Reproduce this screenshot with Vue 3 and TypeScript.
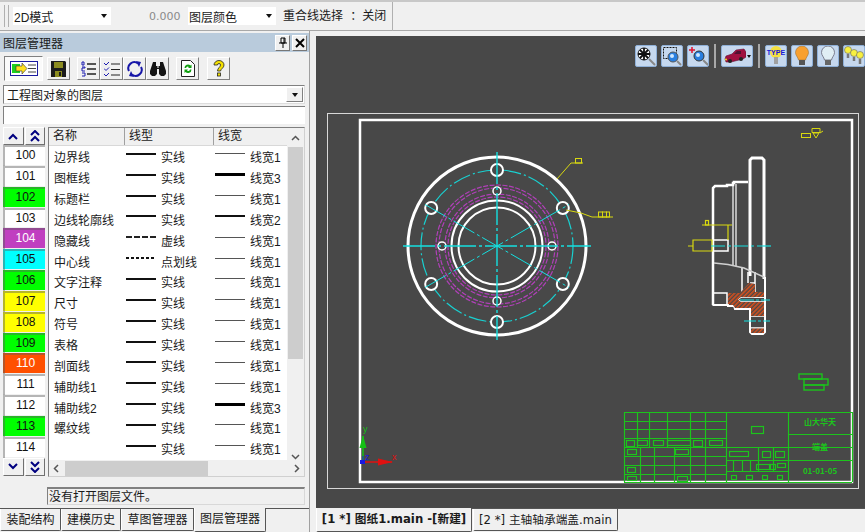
<script setup lang="ts">
interface Layer {
  no: number
  name: string
  type: 'solid' | 'dash' | 'center'
  width: 1 | 2 | 3
  color?: string
  light?: boolean
}

const layers: Layer[] = [
  { no: 100, name: '边界线', type: 'solid', width: 1 },
  { no: 101, name: '图框线', type: 'solid', width: 3 },
  { no: 102, name: '标题栏', type: 'solid', width: 1, color: '#00ff00' },
  { no: 103, name: '边线轮廓线', type: 'solid', width: 2 },
  { no: 104, name: '隐藏线', type: 'dash', width: 1, color: '#c03fc0', light: true },
  { no: 105, name: '中心线', type: 'center', width: 1, color: '#00ffff' },
  { no: 106, name: '文字注释', type: 'solid', width: 1, color: '#00ff00' },
  { no: 107, name: '尺寸', type: 'solid', width: 1, color: '#ffff00' },
  { no: 108, name: '符号', type: 'solid', width: 1, color: '#ffff00' },
  { no: 109, name: '表格', type: 'solid', width: 1, color: '#00ff00' },
  { no: 110, name: '剖面线', type: 'solid', width: 1, color: '#ff5000', light: true },
  { no: 111, name: '辅助线1', type: 'solid', width: 1 },
  { no: 112, name: '辅助线2', type: 'solid', width: 3 },
  { no: 113, name: '螺纹线', type: 'solid', width: 1, color: '#00ff00' },
  { no: 114, name: '', type: 'solid', width: 1 },
]

const typeNames = { solid: '实线', dash: '虚线', center: '点划线' }

const cx = 181
const cy = 210
const rad = Math.PI / 180
const boltHoles = [90, 30, -30, -90, -150, 150].map((a) => ({
  x: cx + 76 * Math.cos(a * rad),
  y: cy - 76 * Math.sin(a * rad),
}))
const pinHoles = [
  { x: cx, y: cy - 55 },
  { x: cx, y: cy + 55 },
  { x: cx - 55, y: cy },
  { x: cx + 55, y: cy },
]

// title block cells, coords are in the canvas svg (viewport origin 316,36)
const tbH = [
  [308, 410, 385], [308, 410, 393], [308, 410, 402], [308, 410, 411], [308, 410, 420],
  [308, 410, 429], [308, 410, 438], [410, 536, 411], [410, 472, 424], [410, 472, 435],
  [472, 536, 398], [472, 536, 424], [308, 536, 376], [308, 536, 446],
]
const tbV = [
  [308, 376, 446], [321, 376, 411], [333, 376, 411], [351, 376, 411], [374, 376, 446],
  [389, 376, 446], [324, 411, 446], [338, 411, 446], [358, 411, 446], [410, 376, 446],
  [472, 376, 446], [536, 376, 446], [442, 411, 435], [457, 411, 435], [417, 424, 435],
  [426, 424, 435], [434, 424, 435],
]
const tbBoxes = [
  [310, 404, 8, 6], [321, 404, 10, 5], [337, 404, 10, 5], [351, 404, 23, 5], [377, 404, 9, 6],
  [393, 404, 13, 5], [311, 413, 9, 5], [359, 413, 13, 5], [311, 431, 8, 5], [311, 440, 9, 4],
  [361, 440, 10, 5], [435, 390, 12, 7], [413, 415, 19, 5], [446, 415, 8, 6], [459, 415, 9, 6],
  [440, 428, 19, 5], [453, 428, 1, 5], [461, 427, 8, 4], [415, 439, 5, 4], [430, 439, 6, 4],
  [446, 439, 5, 4], [461, 439, 5, 4],
]
</script>

<template>
  <div class="app">
    <div class="topbar">
      <span class="grip"></span>
      <div class="combo mode"><span>2D模式</span><i class="arrow"></i></div>
      <span class="zero">0.000</span>
      <div class="combo color"><span>图层颜色</span><i class="arrow"></i></div>
      <span class="overlap">重合线选择 ：关闭</span>
    </div>

    <div class="main">
      <aside class="side">
        <div class="title">
          <span>图层管理器</span>
          <div class="title-btns">
            <button class="mini">
              <svg width="10" height="11" viewBox="0 0 10 11"><path d="M3 1h4v5H3zM1 6h8M5 6v5M6 1v5" fill="none" stroke="#000" /></svg>
            </button>
            <button class="mini">
              <svg width="10" height="10" viewBox="0 0 10 10"><path d="M1 1l8 8M9 1l-8 8" stroke="#000" stroke-width="2" /></svg>
            </button>
          </div>
        </div>

        <div class="tools">
          <button class="tool wide">
            <svg width="28" height="15" viewBox="0 0 28 15">
              <rect x="0.5" y="0.5" width="27" height="14" fill="#fff" stroke="#1a1aa0" />
              <rect x="2" y="3" width="8" height="9" fill="#20d020" />
              <path d="M6 5h6V2l5 5.500-5 5.500v-3H6z" fill="#ffe020" stroke="#333" stroke-width=".6" />
              <path d="M18 4h8M18 7.500h8M18 11h8" stroke="#444" />
            </svg>
          </button>
          <button class="tool">
            <svg width="15" height="16" viewBox="0 0 15 16">
              <path d="M0 0h14l1 1v15H0z" fill="#1c1c1c" />
              <rect x="3" y="1" width="9" height="6" fill="#8c8c20" />
              <rect x="4" y="10" width="7" height="6" fill="#8c8c20" />
              <rect x="8" y="11" width="2" height="4" fill="#1c1c1c" />
            </svg>
          </button>
          <i class="gap"></i>
          <button class="tool">
            <svg width="16" height="16" viewBox="0 0 16 16">
              <path d="M1 1h2v3H1zM1 6h3v1H1v3h3M1 12h3v3H1" fill="none" stroke="#1a1ab0" />
              <path d="M6 3h9M6 8h9M6 13h9" stroke="#222" stroke-width="1.600" />
            </svg>
          </button>
          <button class="tool">
            <svg width="16" height="16" viewBox="0 0 16 16">
              <path d="M0 2l2 2 3-3M0 7.500l2 2 3-3M0 13l2 2 3-3" fill="none" stroke="#1a1ab0" />
              <path d="M7 3h9M7 8.500h9M7 14h9" stroke="#222" />
            </svg>
          </button>
          <button class="tool">
            <svg width="16" height="16" viewBox="0 0 16 16">
              <path d="M2 10A6 6 0 0 1 11 2.500M14 6a6 6 0 0 1-9 7.500" fill="none" stroke="#1616a8" stroke-width="2" />
              <path d="M9 0l5 1-2 5zM7 16l-5-1 2-5z" fill="#1616a8" />
            </svg>
          </button>
          <button class="tool">
            <svg width="16" height="15" viewBox="0 0 16 15">
              <path d="M3 1h3v4h4V1h3l3 9v3l-2 2h-3l-2-2V8H7v5l-2 2H2l-2-2v-3z" fill="#151515" />
              <rect x="7" y="5" width="2" height="2" fill="#888" />
            </svg>
          </button>
          <i class="gap"></i>
          <button class="tool">
            <svg width="14" height="17" viewBox="0 0 14 17">
              <path d="M.5.500h9l4 4v12H.500z" fill="#fff" stroke="#222" />
              <path d="M3.500 8a3.500 3.500 0 0 1 6-2.500l1-1v3.500H7l1-1A2 2 0 0 0 5 8z" fill="#12a012" />
              <path d="M10.500 9.500a3.500 3.500 0 0 1-6 2.500l-1 1V9.500H7l-1 1a2 2 0 0 0 3-1z" fill="#12a012" />
            </svg>
          </button>
          <i class="gap wider"></i>
          <button class="tool">
            <svg width="12" height="18" viewBox="0 0 12 18">
              <path d="M1 5a5 4.500 0 0 1 10 0c0 3-3 3.500-3.500 6h-3c0-3 3-4 3-6a1.500 1.500 0 0 0-3 0z" fill="#f4e000" stroke="#222" stroke-width=".8" />
              <rect x="4.500" y="13" width="3" height="3" fill="#f4e000" stroke="#222" stroke-width=".8" />
            </svg>
          </button>
        </div>

        <div class="select-line"><span>工程图对象的图层</span><button class="drop"><i class="arrow"></i></button></div>
        <div class="input-line"></div>

        <div class="layers">
          <div class="numbers">
            <div class="steppers">
              <button class="step">
                <svg width="10" height="7" viewBox="0 0 10 7"><path d="M1 6l4-4 4 4" fill="none" stroke="#000080" stroke-width="2" /></svg>
              </button>
              <button class="step">
                <svg width="10" height="12" viewBox="0 0 10 12"><path d="M1 5l4-4 4 4M1 11l4-4 4 4" fill="none" stroke="#000080" stroke-width="2" /></svg>
              </button>
            </div>
            <div
              v-for="l in layers"
              :key="l.no"
              class="num"
              :class="{ light: l.light }"
              :style="{ background: l.color || '#fff' }"
            >{{ l.no }}</div>
            <div class="steppers">
              <button class="step">
                <svg width="10" height="7" viewBox="0 0 10 7"><path d="M1 1l4 4 4-4" fill="none" stroke="#000080" stroke-width="2" /></svg>
              </button>
              <button class="step">
                <svg width="10" height="12" viewBox="0 0 10 12"><path d="M1 1l4 4 4-4M1 7l4 4 4-4" fill="none" stroke="#000080" stroke-width="2" /></svg>
              </button>
            </div>
          </div>

          <div class="grid-box">
            <div class="grid-top">
              <div class="grid-main">
                <div class="head">
                  <span class="c1">名称</span>
                  <span class="c2">线型</span>
                  <span class="c3">线宽</span>
                </div>
                <div v-for="l in layers" :key="l.no" class="row">
                  <span class="c1 name">{{ l.name }}</span>
                  <span class="c2 cell">
                    <i class="line" :class="l.type"></i>{{ typeNames[l.type] }}
                  </span>
                  <span class="c3 cell">
                    <i class="wline" :class="'w' + l.width"></i>线宽{{ l.width }}
                  </span>
                </div>
              </div>
              <div class="vscroll">
                <svg width="9" height="6" viewBox="0 0 9 6"><path d="M1 5l3.500-3.500L8 5" fill="none" stroke="#555" stroke-width="1.500" /></svg>
                <div class="vtrack"><div class="vthumb"></div></div>
                <svg width="9" height="6" viewBox="0 0 9 6"><path d="M1 1l3.500 3.500L8 1" fill="none" stroke="#555" stroke-width="1.500" /></svg>
              </div>
            </div>
            <div class="hscroll">
              <svg width="6" height="9" viewBox="0 0 6 9"><path d="M5 1L1.500 4.500 5 8" fill="none" stroke="#555" stroke-width="1.500" /></svg>
              <div class="htrack"><div class="hthumb"></div></div>
              <svg width="6" height="9" viewBox="0 0 6 9"><path d="M1 1l3.500 3.500L1 8" fill="none" stroke="#555" stroke-width="1.500" /></svg>
            </div>
          </div>
        </div>

        <div class="status">没有打开图层文件。</div>

        <div class="tabs left-tabs">
          <span class="tab t1">装配结构</span>
          <span class="tab t2">建模历史</span>
          <span class="tab t3">草图管理器</span>
          <span class="tab t4 active">图层管理器</span>
        </div>
      </aside>

      <section class="work">
        <div class="viewport">
          <svg class="canvas" width="549" height="472" viewBox="0 0 549 472">
            <defs>
              <pattern id="hatch" width="3" height="3" patternUnits="userSpaceOnUse" patternTransform="rotate(-45)">
                <rect width="3" height="3" fill="#484848" />
                <rect width="3" height="1.600" fill="#d8501c" />
              </pattern>
            </defs>

            <rect x="11.500" y="77.500" width="531" height="375" fill="none" stroke="#d8d8d8" />
            <rect x="44" y="84" width="492" height="362" fill="none" stroke="#fff" stroke-width="2.500" />

            <!-- front view -->
            <g fill="none">
              <circle :cx="cx" :cy="cy" r="89" stroke="#fff" stroke-width="3" />
              <circle :cx="cx" :cy="cy" r="76" stroke="#19d0d0" stroke-width="1.200" stroke-dasharray="18 3 2 3" />
              <circle :cx="cx" :cy="cy" r="61" stroke="#b040b8" stroke-width="1.200" stroke-dasharray="5 1.500" />
              <circle :cx="cx" :cy="cy" r="58" stroke="#b040b8" stroke-width="1.200" stroke-dasharray="5 1.500" />
              <circle :cx="cx" :cy="cy" r="52" stroke="#b040b8" stroke-width="1.200" stroke-dasharray="5 1.500" />
              <circle :cx="cx" :cy="cy" r="49" stroke="#b040b8" stroke-width="1.200" stroke-dasharray="5 1.500" />
              <circle :cx="cx" :cy="cy" r="45.500" stroke="#fff" stroke-width="2" />
              <circle :cx="cx" :cy="cy" r="38.500" stroke="#fff" stroke-width="2" />
              <circle v-for="(h, i) in boltHoles" :key="i" :cx="h.x" :cy="h.y" r="6" stroke="#fff" stroke-width="2" fill="#484848" />
              <circle v-for="(h, i) in pinHoles" :key="i" :cx="h.x" :cy="h.y" r="4" stroke="#fff" stroke-width="1.500" fill="#484848" />
              <g stroke="#14e0e0">
                <path d="M87 210h188" stroke-width="1.400" stroke-dasharray="32 3 3 3" />
                <path d="M181 116v188" stroke-width="1.400" stroke-dasharray="32 3 3 3" />
                <path :d="`M${cx - 72} ${cy - 41.500}L${cx + 72} ${cy + 41.500}M${cx - 72} ${cy + 41.500}L${cx + 72} ${cy - 41.500}`" stroke-width="1" stroke-dasharray="24 3 3 3" />
              </g>
              <g stroke="#d8d810" stroke-width="1">
                <path d="M241 143l14-16h12" />
                <path d="M250 174l15 3 11 4h21" />
                <rect x="259.500" y="122.500" width="6" height="4.500" />
                <rect x="282.500" y="176" width="4" height="5" />
                <rect x="286.500" y="176" width="4" height="5" />
                <rect x="290.500" y="176" width="3" height="5" />
              </g>
            </g>

            <!-- side view -->
            <g fill="none" stroke="#fff" stroke-width="2">
              <path d="M397 269V152l2-2h12v-1h6v-2h1v-1h14" stroke-width="2.500" />
              <path d="M417 149v80M420 148v82" stroke-width="1.200" />
              <path d="M434 240V124l2-2h10l2 2v119" stroke-width="3" />
              <path d="M397 257h14v12H397zM397 204h15v11H397z" stroke-width="1.500" />
              <path d="M397 269h15v1h6l1 3h15V296l2 2h11l2-2V241" stroke-width="2" />
              <path d="M426 232v24M432 236v11M434 247h5v-11M439 247v14h10" stroke-width="1.500" />
              <path d="M425 261h23M425 266h23M425 261l-3 2.500 3 2.500" stroke-width="1.500" />
              <path d="M435 280h14M435 292h14" stroke-width="1.500" />
              <path d="M398 227l14 1.500 16 3.500 20 9" stroke-width="1.500" stroke="#d0d0d0" />
            </g>
            <path d="M412 257h12l9-10 6 1v8h9v5h-23l-3 2.500 3 2.500h23v14h-13v-8h-16l-2-3-5-1z" fill="url(#hatch)" />
            <rect x="435" y="292.500" width="13" height="4.500" fill="url(#hatch)" />
            <g fill="none" stroke="#d8d810" stroke-width="1.200">
              <path d="M386 189h30M412 189v15M377 204h19v11h-19zM372 210h5" />
              <rect x="389.500" y="184.500" width="3" height="4.500" />
            </g>
            <g stroke="#14e0e0" stroke-width="1.200" fill="none">
              <path d="M395 210h61" stroke-dasharray="14 3 3 3" />
              <path d="M424 264h30" stroke-dasharray="14 2 3 2" />
              <path d="M428 285h26" stroke-dasharray="12 2 3 2" />
            </g>

            <!-- yellow mark top right -->
            <g fill="none" stroke="#d8d810">
              <rect x="485.500" y="97.500" width="9" height="4" />
              <path d="M496 92.500h8v4h-8zM497 97h6l-3 5zM504 97l3-2" />
            </g>

            <!-- green notes -->
            <g fill="none" stroke="#1cc41c" stroke-width="1.400">
              <rect x="483" y="338" width="23" height="5" />
              <rect x="488" y="343" width="24" height="6" />
              <rect x="488" y="349" width="20" height="5" />
            </g>

            <!-- title block -->
            <g stroke="#1cc41c" stroke-width="1.200">
              <path v-for="(h, i) in tbH" :key="'h' + i" :d="`M${h[0]} ${h[2] + 0.5}H${h[1]}`" />
              <path v-for="(v, i) in tbV" :key="'v' + i" :d="`M${v[0] + 0.5} ${v[1]}V${v[2]}`" />
              <rect v-for="(b, i) in tbBoxes" :key="'b' + i" :x="b[0] + 0.5" :y="b[1] + 0.5" :width="b[2]" :height="b[3]" fill="none" />
            </g>
            <g class="tb-text" fill="#1cc41c" text-anchor="middle">
              <text x="504" y="389">山大华天</text>
              <text x="504" y="414">端盖</text>
              <text x="504" y="438">01-01-05</text>
            </g>

            <!-- axis triad -->
            <g>
              <path d="M47 426V400" stroke="#14c014" stroke-width="1.500" />
              <path d="M47 399l3.500 13h-7z" fill="#14c014" />
              <path d="M47 426H76" stroke="#e01010" stroke-width="1.500" />
              <path d="M77 426l-15-3.500v7z" fill="#e01010" />
              <rect x="44" y="424" width="5" height="4" fill="#1818e0" />
              <path d="M47 426v-6" stroke="#1818e0" />
              <text x="47" y="396" class="axis" fill="#14c014">y</text>
              <text x="49" y="424" class="axis" fill="#1818e0">z</text>
              <text x="76" y="424" class="axis" fill="#e01010">x</text>
            </g>
          </svg>

          <div class="view-tools">
            <button class="vbtn">
              <svg width="20" height="20" viewBox="0 0 20 20">
                <circle cx="8" cy="8" r="6" fill="#fff" stroke="#111" />
                <path d="M8 2v12M2 8h12M4 4l8 8M12 4l-8 8" stroke="#111" stroke-width="1.800" />
                <path d="M13 13l6 6" stroke="#888" stroke-width="2" />
              </svg>
            </button>
            <button class="vbtn">
              <svg width="20" height="20" viewBox="0 0 20 20">
                <rect x="1.500" y="1.500" width="13" height="11" fill="none" stroke="#111" stroke-dasharray="2 1" />
                <circle cx="11" cy="11" r="5" fill="#2a7fe0" stroke="#555" />
                <circle cx="10" cy="10" r="2" fill="#cfe8ff" />
                <path d="M15 15l4 4" stroke="#888" stroke-width="2" />
              </svg>
            </button>
            <button class="vbtn">
              <svg width="20" height="20" viewBox="0 0 20 20">
                <path d="M4 1v6M1 4h6" stroke="#e01030" stroke-width="1.500" />
                <circle cx="11" cy="10" r="5" fill="#2a7fe0" stroke="#333" />
                <circle cx="10" cy="9" r="2" fill="#cfe8ff" />
                <path d="M15 14l5 5" stroke="#888" stroke-width="2" />
              </svg>
            </button>
            <i class="vsep"></i>
            <button class="vbtn car">
              <svg width="22" height="16" viewBox="0 0 22 16">
                <path d="M1 11l1-3 6-2 4-4 8-1 2 3v5l-3 2-12 3-5 0z" fill="#a01040" stroke="#601030" stroke-width=".6" />
                <path d="M10 6l3-3 4 0 0 3z" fill="#501030" />
                <circle cx="6" cy="13" r="2" fill="#222" />
                <circle cx="17" cy="11" r="2" fill="#222" />
                <circle cx="2" cy="11.500" r="1" fill="#f0e020" />
              </svg>
              <i class="arrow dark"></i>
            </button>
            <i class="vsep"></i>
            <button class="vbtn">
              <svg width="20" height="20" viewBox="0 0 20 20">
                <circle cx="10" cy="6" r="6" fill="#f4e040" />
                <rect x="8" y="11" width="4" height="7" fill="#a0a0a0" />
                <text x="10" y="9" text-anchor="middle" class="type-txt">TYPE</text>
              </svg>
            </button>
            <button class="vbtn">
              <svg width="16" height="20" viewBox="0 0 16 20">
                <path d="M8 0a6.500 6.500 0 0 1 6.500 6.500c0 3-2.500 4.500-3 7.500h-7c-.5-3-3-4.500-3-7.500A6.500 6.500 0 0 1 8 0z" fill="#f8a030" stroke="#a07030" stroke-width=".6" />
                <rect x="5" y="14" width="6" height="5" fill="#555" />
              </svg>
            </button>
            <button class="vbtn">
              <svg width="16" height="20" viewBox="0 0 16 20">
                <path d="M8 0a6.500 6.500 0 0 1 6.500 6.500c0 3-2.500 4.500-3 7.500h-7c-.5-3-3-4.500-3-7.500A6.500 6.500 0 0 1 8 0z" fill="#e0eef4" stroke="#667" stroke-width=".8" />
                <rect x="5" y="14" width="6" height="5" fill="#666" />
              </svg>
            </button>
            <button class="vbtn">
              <svg width="20" height="20" viewBox="0 0 20 20">
                <circle cx="4" cy="4" r="3.500" fill="#f8f040" stroke="#666" stroke-width=".6" />
                <circle cx="10" cy="7" r="3.500" fill="#f8f040" stroke="#666" stroke-width=".6" />
                <circle cx="16" cy="9" r="3.500" fill="#f8f040" stroke="#666" stroke-width=".6" />
                <path d="M4 8v4M10 11v4M16 13v5" stroke="#777" stroke-width="2.500" />
              </svg>
            </button>
          </div>
        </div>

        <div class="tabs doc-tabs">
          <span class="tab doc active-doc">[1 *] 图纸1.main -[新建]</span>
          <span class="tab doc second">[2 *] 主轴轴承端盖.main</span>
        </div>
      </section>
    </div>
  </div>
</template>

<style>
html,
body {
  margin: 0;
  background: #f0f0f0;
}
</style>

<style scoped>
.app {
  width: 865px;
  height: 532px;
  overflow: hidden;
  display: flex;
  flex-direction: column;
  background: #f0f0f0;
  font-family: "Liberation Sans", "Noto Sans CJK SC", sans-serif;
  font-size: 12px;
  color: #1a1a1a;
}
button {
  padding: 0;
  font: inherit;
  display: flex;
  align-items: center;
  justify-content: center;
  background: #f0f0f0;
}
i {
  font-style: normal;
}
.arrow {
  width: 0;
  height: 0;
  border-left: 3.5px solid transparent;
  border-right: 3.5px solid transparent;
  border-top: 4px solid #111;
}

/* top toolbar */
.topbar {
  height: 31px;
  flex: none;
  box-sizing: border-box;
  display: flex;
  align-items: center;
  border-top: 2px solid #c8c8c8;
  border-bottom: 1px solid #a8a8a8;
  padding-left: 4px;
}
.grip {
  width: 3px;
  height: 22px;
  margin-right: 4px;
  border-left: 1px solid #b0b0b0;
  border-right: 1px solid #b0b0b0;
}
.combo {
  height: 18px;
  background: #fff;
  display: flex;
  align-items: center;
  justify-content: space-between;
  font-size: 12px;
  padding: 0 4px 0 1px;
  box-sizing: border-box;
}
.mode {
  width: 98px;
}
.color {
  width: 88px;
}
.zero {
  margin-left: 38px;
  width: 39px;
  color: #8a8a8a;
  font-family: "DejaVu Sans", sans-serif;
  font-size: 11px;
}
.overlap {
  margin-left: 7px;
  width: 109px;
  height: 29px;
  line-height: 28px;
  font-size: 12px;
  word-spacing: 4px;
  white-space: nowrap;
  border-right: 1px solid #b0b0b0;
}

.main {
  flex: 1;
  display: flex;
  min-height: 0;
}

/* left panel */
.side {
  width: 310px;
  flex: none;
  display: flex;
  flex-direction: column;
  box-sizing: border-box;
  padding-top: 2px;
  border-right: 1px solid #a0a0a0;
}
.title {
  height: 19px;
  flex: none;
  background: #b9cbdc;
  display: flex;
  align-items: center;
  justify-content: space-between;
  padding: 0 2px 0 3px;
  font-size: 12px;
}
.title-btns {
  display: flex;
  gap: 2px;
}
.mini {
  width: 15px;
  height: 16px;
  border: 1px solid;
  border-color: #fff #777 #777 #fff;
}
.tools {
  height: 31px;
  flex: none;
  display: flex;
  align-items: center;
  padding: 2px 0 0 4px;
  box-sizing: border-box;
}
.tool {
  width: 23px;
  height: 23px;
  border: 1px solid;
  border-color: #fff #808080 #808080 #fff;
}
.tool.wide {
  width: 39px;
  height: 25px;
  margin-right: 4px;
  background: #fafafa;
  border-color: #808080 #fff #fff #808080;
}
.gap {
  width: 7px;
}
.gap.wider {
  width: 8px;
}
.select-line {
  margin: 2px 4px 0 3px;
  height: 19px;
  flex: none;
  background: #fff;
  border: 1px solid #808080;
  border-right-color: #ddd;
  border-bottom-color: #ddd;
  box-sizing: border-box;
  display: flex;
  align-items: center;
  justify-content: space-between;
  padding-left: 3px;
  font-size: 12px;
}
.drop {
  width: 17px;
  height: 15px;
  margin-right: 1px;
  border: 1px solid;
  border-color: #fff #808080 #808080 #fff;
}
.input-line {
  margin: 2px 4px 0 3px;
  height: 18px;
  flex: none;
  background: #fff;
  border-top: 1px solid #808080;
  border-left: 1px solid #808080;
  box-sizing: border-box;
}
.layers {
  display: flex;
  margin: 3px 4px 0 3px;
  gap: 3px;
}
.numbers {
  width: 42px;
  flex: none;
}
.steppers {
  display: flex;
  gap: 1px;
  height: 18px;
}
.step {
  width: 21px;
  height: 18px;
  border: 1px solid;
  border-color: #fff #707070 #707070 #fff;
}
.num {
  height: 20.85px;
  box-sizing: border-box;
  line-height: 21px;
  text-align: center;
  padding-left: 3px;
  font-size: 12px;
  color: #111;
  box-shadow: inset 2px 2px 0 rgba(90, 90, 90, 0.45), inset 0 -1px 0 #f0f0f0;
}
.num.light {
  color: #fff;
}
.grid-box {
  flex: 1;
  min-width: 0;
  box-sizing: border-box;
  height: 350px;
  border: 1px solid;
  border-color: #808080 #d0d0d0 #d0d0d0 #808080;
  overflow: hidden;
}
.grid-top {
  display: flex;
  height: 332px;
}
.grid-main {
  flex: 1;
  min-width: 0;
  background: #fff;
}
.head {
  height: 17px;
  display: flex;
  background: #f0f0f0;
  align-items: center;
  box-shadow: 0 1px 0 #d8d8d8;
  font-size: 12px;
}
.head .c1,
.head .c2 {
  border-right: 1px solid #a0a0a0;
}
.head span {
  padding-left: 4px;
  box-sizing: border-box;
  height: 17px;
  line-height: 17px;
}
.row {
  height: 20.85px;
  display: flex;
  align-items: center;
  font-size: 12px;
  box-sizing: border-box;
  padding-top: 3px;
}
.c1 {
  width: 76px;
  flex: none;
}
.c2 {
  width: 89px;
  flex: none;
}
.c3 {
  width: 72px;
  flex: none;
}
.name {
  padding-left: 5px;
  box-sizing: border-box;
  white-space: nowrap;
}
.cell {
  display: flex;
  align-items: center;
  white-space: nowrap;
  overflow: hidden;
}
.line,
.wline {
  display: block;
  width: 30px;
  flex: none;
  margin: -6px 5px 0 1px;
  height: 0;
  border-top: 2px solid #111;
}
.line.dash {
  border-top: 2px dashed #222;
}
.line.center {
  border-top: 0;
  height: 2px;
  background: repeating-linear-gradient(90deg, #111 0 3px, transparent 3px 5px);
}
.wline {
  margin-right: 5px;
}
.wline.w1 {
  border-top: 1px solid #555;
}
.wline.w2 {
  border-top: 2px solid #111;
}
.wline.w3 {
  border-top: 3px solid #000;
}
.vscroll {
  width: 17px;
  flex: none;
  background: #f0f0f0;
  display: flex;
  flex-direction: column;
  align-items: center;
  padding-top: 7px;
  box-sizing: border-box;
}
.vtrack {
  flex: 1;
  width: 15px;
  padding-top: 6px;
  margin-bottom: 6px;
}
.vthumb {
  height: 212px;
  background: #cdcdcd;
}
.hscroll {
  height: 17px;
  display: flex;
  align-items: center;
  background: #f0f0f0;
  padding: 0 4px;
}
.htrack {
  flex: 1;
  padding: 0 6px;
  padding-right: 80px;
}
.hthumb {
  height: 15px;
  width: 143px;
  background: #cdcdcd;
}
.status {
  margin: 10px 4px 0 47px;
  height: 18px;
  flex: none;
  line-height: 16px;
  padding-left: 1px;
  border: 1px solid;
  border-color: #808080 #d8d8d8 #d8d8d8 #808080;
  border-width: 2px 1px 1px 1px;
  box-sizing: border-box;
  font-size: 12px;
}

/* tabs */
.tabs {
  display: flex;
  flex: none;
  height: 24px;
  margin-top: auto;
  border-top: 1px solid #555;
  box-sizing: border-box;
}
.tab {
  height: 22px;
  line-height: 22px;
  text-align: center;
  box-sizing: border-box;
  border-right: 1px solid #555;
  border-bottom: 1px solid #555;
  border-left: 1px solid #fff;
  border-radius: 0 0 2px 2px;
  font-size: 12px;
  white-space: nowrap;
}
.t1 {
  width: 61px;
}
.t2 {
  width: 60px;
}
.t3 {
  width: 73px;
}
.t4 {
  width: 72px;
}
.tab.active {
  margin-top: -1px;
  height: 24px;
  background: #f0f0f0;
}
.work {
  flex: 1;
  min-width: 0;
  display: flex;
  flex-direction: column;
  padding-left: 6px;
  padding-top: 5px;
}
.viewport {
  position: relative;
  height: 472px;
  background: #484848;
  flex: none;
}
.canvas {
  display: block;
}
.tb-text {
  font-size: 8px;
  font-family: "Noto Sans CJK SC", sans-serif;
  font-weight: 700;
}
.axis {
  font-size: 9px;
  font-family: "Liberation Sans", sans-serif;
}
.view-tools {
  position: absolute;
  top: 8px;
  left: 319px;
  display: flex;
  align-items: center;
  gap: 4px;
}
.vbtn {
  width: 22px;
  height: 22px;
  background: #c6d8ee;
  border: 1px solid #8fb0d8;
  border-radius: 2px;
  box-sizing: border-box;
}
.vbtn.car {
  width: 32px;
  gap: 1px;
}
.arrow.dark {
  border-left-width: 2.5px;
  border-right-width: 2.5px;
  border-top-width: 3px;
}
.vsep {
  width: 2px;
  height: 24px;
  background: #a8a8a8;
  margin: 0 1px;
}
.type-txt {
  font-size: 7px;
  font-weight: 700;
  fill: #1414d8;
  font-family: "Liberation Sans", sans-serif;
}
.doc-tabs {
  border-top-color: #555;
  height: 24px;
}
.doc {
  font-family: "DejaVu Sans", "Noto Sans CJK SC", sans-serif;
  font-size: 11.7px;
}
.active-doc {
  width: 156px;
  font-weight: 700;
  background: #f0f0f0;
  margin-top: -1px;
  height: 24px;
}
.second {
  width: 145px;
  margin-left: 1px;
}
</style>
